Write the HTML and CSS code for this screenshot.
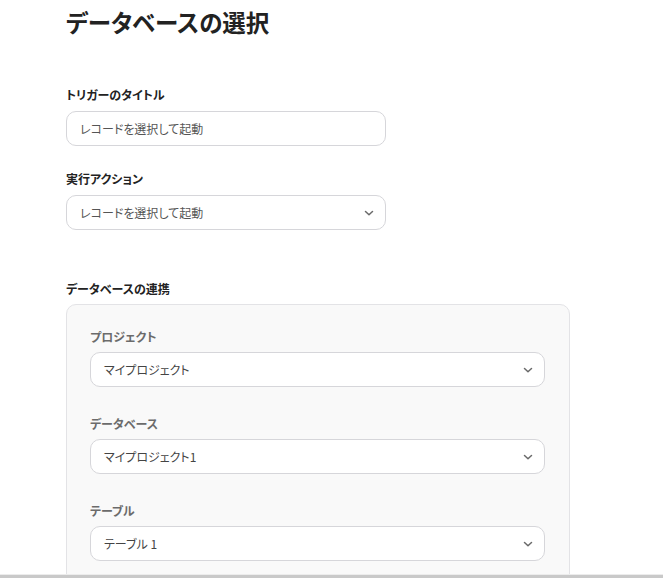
FILE: index.html
```html
<!DOCTYPE html>
<html lang="ja">
<head>
<meta charset="utf-8">
<title>データベースの選択</title>
<link rel="stylesheet" href="styles.css">
</head>
<body>
<main class="page">
  <h1 class="title">データベースの選択</h1>

  <section class="field field-first">
    <label class="label">トリガーのタイトル</label>
    <div class="control"><span class="value">レコードを選択して起動</span></div>
  </section>

  <section class="field">
    <label class="label">実行アクション</label>
    <div class="control select">
      <span class="value">レコードを選択して起動</span>
      <svg class="chev" viewBox="0 0 12 12" width="12" height="12"><path d="M2.5 4.5 L6 7.8 L9.5 4.5" fill="none" stroke="#6a6a6a" stroke-width="1.5" stroke-linecap="round" stroke-linejoin="round"/></svg>
    </div>
  </section>

  <section class="field field-group">
    <label class="label">データベースの連携</label>
    <div class="panel">
      <div class="sub">
        <label class="sublabel">プロジェクト</label>
        <div class="control select wide">
          <span class="value dark">マイプロジェクト</span>
          <svg class="chev" viewBox="0 0 12 12" width="12" height="12"><path d="M2.5 4.5 L6 7.8 L9.5 4.5" fill="none" stroke="#6a6a6a" stroke-width="1.5" stroke-linecap="round" stroke-linejoin="round"/></svg>
        </div>
      </div>
      <div class="sub">
        <label class="sublabel">データベース</label>
        <div class="control select wide">
          <span class="value dark">マイプロジェクト1</span>
          <svg class="chev" viewBox="0 0 12 12" width="12" height="12"><path d="M2.5 4.5 L6 7.8 L9.5 4.5" fill="none" stroke="#6a6a6a" stroke-width="1.5" stroke-linecap="round" stroke-linejoin="round"/></svg>
        </div>
      </div>
      <div class="sub">
        <label class="sublabel">テーブル</label>
        <div class="control select wide">
          <span class="value dark">テーブル 1</span>
          <svg class="chev" viewBox="0 0 12 12" width="12" height="12"><path d="M2.5 4.5 L6 7.8 L9.5 4.5" fill="none" stroke="#6a6a6a" stroke-width="1.5" stroke-linecap="round" stroke-linejoin="round"/></svg>
        </div>
      </div>
    </div>
  </section>
</main>
<div class="bottombar"></div>
</body>
</html>
```

FILE: styles.css
```css
* { box-sizing: border-box; }
html, body { margin: 0; padding: 0; background: #fff; }
body {
  font-family: "Noto Sans CJK JP", "Noto Sans", sans-serif;
  font-feature-settings: "palt";
  color: #222;
  height: 578px;
  overflow: hidden;
}
.page {
  padding-left: 66px;
}
.title {
  margin: 4px 0 0;
  font-size: 23.5px;
  line-height: 36px;
  font-weight: 700;
  color: #222;
}
.field { display: flex; flex-direction: column; }
.field-first { margin-top: 46px; }
.field + .field { margin-top: 24px; }
.field.field-group { margin-top: 50px; }
.label {
  font-size: 12px;
  line-height: 18px;
  font-weight: 700;
  color: #222;
  margin-bottom: 7px;
}
.field-group .label { margin-bottom: 6px; }
.control {
  width: 320px;
  height: 35px;
  border: 1px solid #d6d6da;
  border-radius: 10px;
  background: #fff;
  display: flex;
  align-items: center;
  padding: 0 10px 0 13px;
}
.value {
  flex: 1;
  font-size: 12px;
  color: #555;
}
.value.dark { color: #444; }
.chev { flex: none; }
.panel {
  width: 504px;
  height: 290px;
  border: 1px solid #e3e3e6;
  border-radius: 10px;
  background: #f9f9f9;
  padding: 23px 24px 0 23px;
  display: flex;
  flex-direction: column;
  gap: 28px;
}
.sub { display: flex; flex-direction: column; }
.sublabel {
  font-size: 12px;
  line-height: 18px;
  font-weight: 700;
  color: #6b6b6b;
  margin-bottom: 6px;
}
.control.wide { width: 455px; }
.bottombar {
  position: fixed;
  left: 0;
  right: 0;
  bottom: 0;
  height: 4px;
  border-top: 1px solid #ececec;
  background: #c9c9c9;
}
```
